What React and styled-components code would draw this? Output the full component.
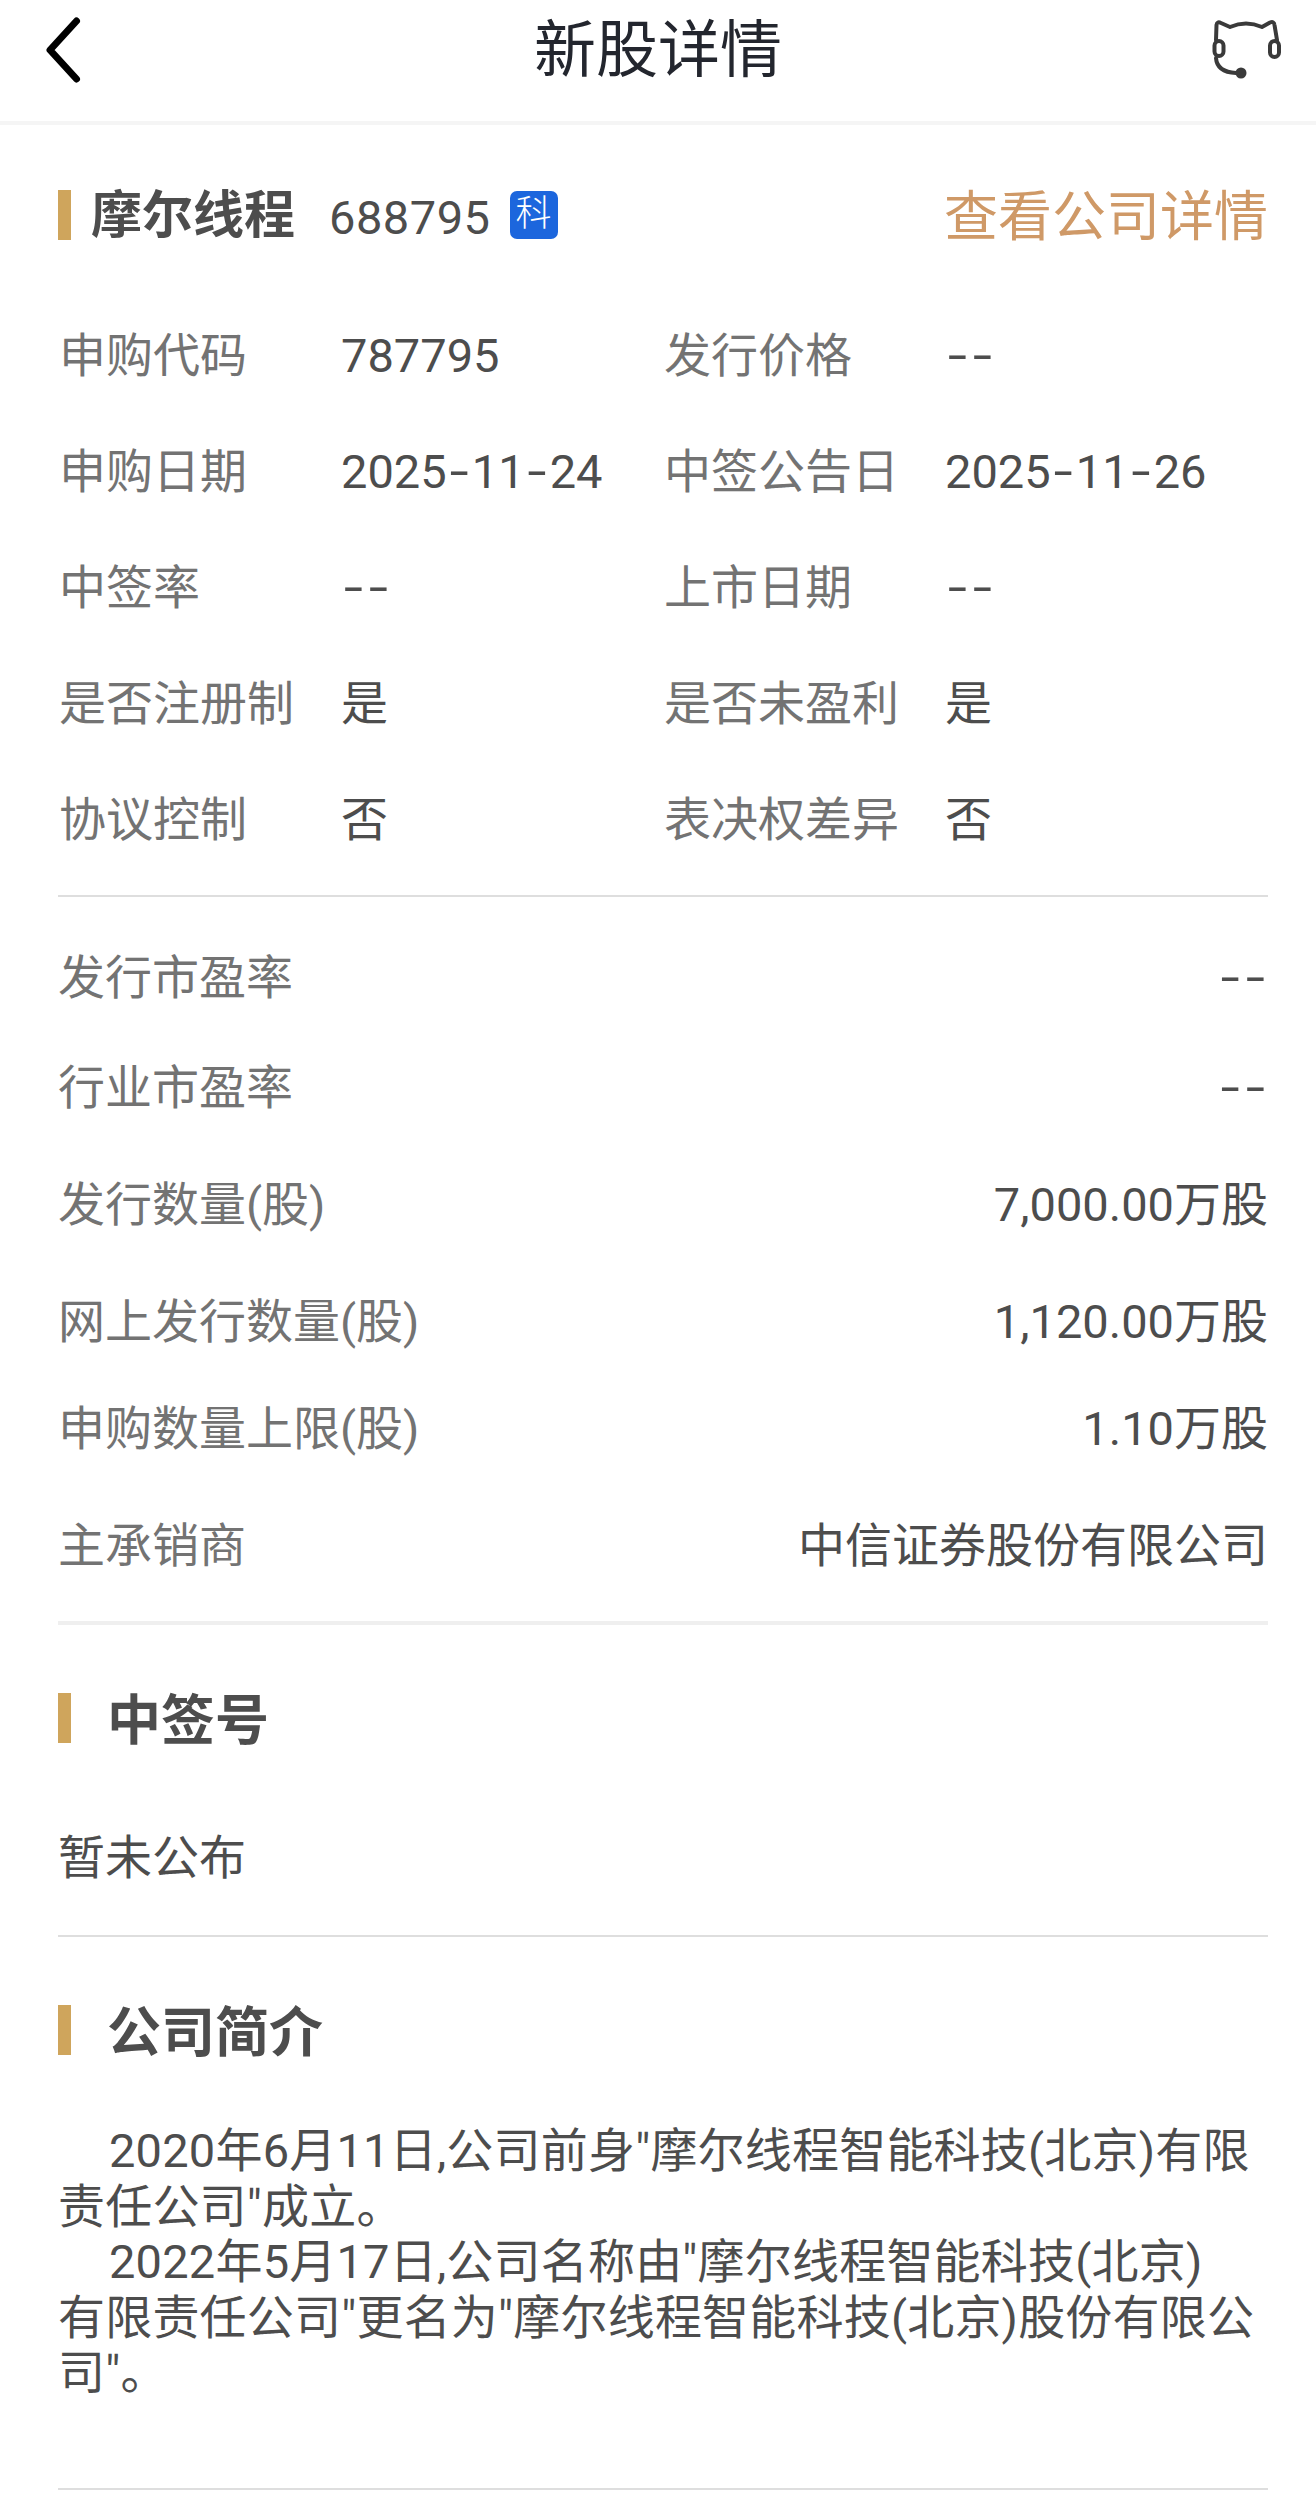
import React from "react";
import styled, { createGlobalStyle } from "styled-components";

const Global = createGlobalStyle`
  html, body { margin: 0; padding: 0; background: #fff; }
  body { font-family: Roboto, "Noto Sans CJK SC", "Noto Sans", sans-serif; }
`;
const Page = styled.div`
  width: 1316px;
  height: 2511px;
  background: #fff;
  overflow: hidden;
`;
const Header = styled.header`
  height: 97px;
  padding-bottom: 24px;
  border-bottom: 4px solid #f5f5f5;
  display: grid;
  grid-template-columns: 1fr auto 1fr;
  align-items: center;
  box-sizing: content-box;
`;
const BackIcon = styled.svg`
  display: block;
  margin-left: 40px;
`;
const Title = styled.h1`
  margin: 0;
  padding-top: 3px;
  font-size: 62px;
  line-height: 96px;
  font-weight: 400;
  color: #23262e;
`;
const HelpIcon = styled.svg`
  display: block;
  justify-self: end;
  margin-right: 32px;
`;
const Body = styled.main`
  padding: 0 48px 0 58px;
`;
const StockHead = styled.div`
  display: flex;
  align-items: center;
  height: 50px;
  margin-top: 65px;
`;
const Accent = styled.span`
  width: 13px;
  height: 50px;
  background: #cfa55c;
  flex: none;
  margin-right: ${(p) => p.$gap}px;
`;
const StockName = styled.span`
  font-size: 51px;
  font-weight: 700;
  color: #4d4d4d;
  line-height: 50px;
  padding-top: 2px;
`;
const StockCode = styled.span`
  font-size: 47px;
  letter-spacing: 0.5px;
  color: #4d4d4d;
  margin-left: 34px;
  line-height: 50px;
  padding-top: 6px;
`;
const Badge = styled.span`
  width: 48px;
  height: 48px;
  margin-left: 19px;
  border-radius: 7px;
  background: #1c66dd;
  color: #fff;
  font-size: 36px;
  line-height: 46px;
  text-align: center;
  font-weight: 300;
`;
const DetailLink = styled.a`
  margin-left: auto;
  font-size: 54px;
  line-height: 50px;
  padding-top: 6px;
  color: #cf9967;
`;
const InfoGrid = styled.div`
  display: grid;
  grid-template-columns: 282px 323px 281px 1fr;
  grid-auto-rows: 116px;
  align-items: center;
  margin-top: 58px;
  padding-left: 1px;
  border-bottom: 2px solid #dedede;
  padding-bottom: 17px;
`;
const GridLabel = styled.span`
  font-size: 47px;
  line-height: 60px;
  color: #737373;
  white-space: nowrap;
`;
const GridValue = styled.span`
  font-size: 47px;
  line-height: 60px;
  color: #4d4d4d;
  white-space: nowrap;
`;
const Dash = styled.span`
  font-size: 70px;
  line-height: 0;
  font-weight: 300;
  vertical-align: -7px;
  padding: 0 2.5px;
`;
const SummaryList = styled.div`
  margin-top: 28px;
  border-bottom: 4px solid #efefef;
  padding-bottom: 8px;
`;
const SummaryRow = styled.div`
  display: flex;
  justify-content: space-between;
  align-items: center;
  height: ${(p) => p.$h}px;
  font-size: 47px;
  line-height: 60px;
  color: #737373;
`;
const SummaryValue = styled.span`
  color: #4d4d4d;
`;
const SectionHead = styled.div`
  display: flex;
  align-items: center;
  height: 50px;
  margin-top: ${(p) => p.$top}px;
`;
const SectionTitle = styled.h2`
  margin: 0;
  padding-top: 8px;
  font-size: 54px;
  line-height: 50px;
  font-weight: 700;
  color: #4d4d4d;
`;
const PendingText = styled.p`
  margin: 0;
  padding: 82px 0 44px;
  font-size: 47px;
  line-height: 66px;
  color: #4d4d4d;
  border-bottom: 2px solid #dedede;
`;
const Intro = styled.div`
  margin-top: 68px;
  padding-bottom: 87px;
  border-bottom: 2px solid #dedede;
`;
const IntroPara = styled.p`
  margin: 0;
  font-size: 47px;
  line-height: 55.6px;
  letter-spacing: 0.2px;
  color: #4d4d4d;
  text-indent: 51px;
`;

const withDashes = (t) =>
  t.split(/(-)/).map((part, i) => (part === "-" ? <Dash key={i}>-</Dash> : part));

const grid = [
  ["申购代码", "787795", "发行价格", "--"],
  ["申购日期", "2025-11-24", "中签公告日", "2025-11-26"],
  ["中签率", "--", "上市日期", "--"],
  ["是否注册制", "是", "是否未盈利", "是"],
  ["协议控制", "否", "表决权差异", "否"],
];
const summary = [
  ["发行市盈率", "--", 106],
  ["行业市盈率", "--", 114],
  ["发行数量(股)", "7,000.00万股", 120],
  ["网上发行数量(股)", "1,120.00万股", 114],
  ["申购数量上限(股)", "1.10万股", 100],
  ["主承销商", "中信证券股份有限公司", 134],
];

export default function App() {
  return (
    <Page>
      <Global />
      <Header>
        <BackIcon width="46" height="70" viewBox="0 0 46 70" fill="none">
          <polyline points="36.5,6 10,35 36.5,64" stroke="#000" strokeWidth="7" strokeLinecap="round" strokeLinejoin="round" />
        </BackIcon>
        <Title>新股详情</Title>
        <HelpIcon width="72" height="62" viewBox="0 0 72 62" fill="none" stroke="#3a3a3a" strokeWidth="4" strokeLinecap="round" strokeLinejoin="round">
          <path d="M4 21 L4.5 6 Q5 2 9 4 L18 8 Q34 1 50 8 L58 3.5 Q62 2 62.5 6 L65 21" />
          <rect x="2.5" y="22" width="9" height="15" rx="4.5" />
          <rect x="58" y="22" width="9" height="16" rx="4.5" />
          <path d="M4 39 Q5 53 24 54" />
          <circle cx="29" cy="54" r="5.5" fill="#3a3a3a" stroke="none" />
        </HelpIcon>
      </Header>
      <Body>
        <StockHead>
          <Accent $gap={20} />
          <StockName>摩尔线程</StockName>
          <StockCode>688795</StockCode>
          <Badge>科</Badge>
          <DetailLink>查看公司详情</DetailLink>
        </StockHead>
        <InfoGrid>
          {grid.map((r) =>
            r.map((t, i) =>
              i % 2 === 0 ? (
                <GridLabel key={r[0] + i}>{t}</GridLabel>
              ) : (
                <GridValue key={r[0] + i}>{withDashes(t)}</GridValue>
              )
            )
          )}
        </InfoGrid>
        <SummaryList>
          {summary.map(([l, v, h]) => (
            <SummaryRow key={l} $h={h}>
              <span>{l}</span>
              <SummaryValue>{withDashes(v)}</SummaryValue>
            </SummaryRow>
          ))}
        </SummaryList>
        <SectionHead $top={68}>
          <Accent $gap={36} />
          <SectionTitle>中签号</SectionTitle>
        </SectionHead>
        <PendingText>暂未公布</PendingText>
        <SectionHead $top={68}>
          <Accent $gap={36} />
          <SectionTitle>公司简介</SectionTitle>
        </SectionHead>
        <Intro>
          <IntroPara>2020年6月11日,公司前身"摩尔线程智能科技(北京)有限责任公司"成立。</IntroPara>
          <IntroPara>2022年5月17日,公司名称由"摩尔线程智能科技(北京)<br />有限责任公司"更名为"摩尔线程智能科技(北京)股份有限公司"。</IntroPara>
        </Intro>
      </Body>
    </Page>
  );
}
